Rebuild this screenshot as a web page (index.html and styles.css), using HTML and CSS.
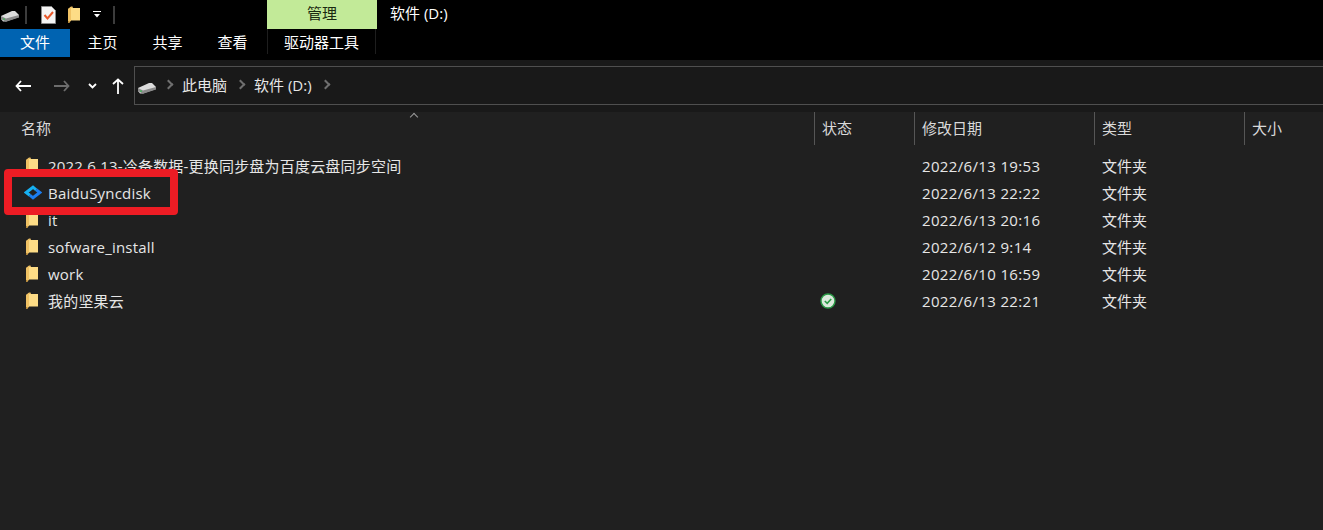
FILE: index.html

```html
<!DOCTYPE html>
<html>
<head>
    <title>软件 (D:)</title>
    <link rel="stylesheet" href="styles.css">
</head>
<body>
    <svg class="defs" width="0" height="0">
        <symbol id="folder" viewBox="0 0 12 17">
            <path d="M0 3 L3 0.5 H4.5 L5 2 H12 V14 H0 Z" fill="#e5b860"/>
            <path d="M3 2 H12 V14.5 H3 L0.8 17 H0 V4 Z" fill="#fddc86"/>
            <path d="M0 3 L3 1 V14.5 L0.8 17 H0 Z" fill="#f0c264"/>
            <rect x="0" y="15" width="1.5" height="2" fill="#b98a3a"/>
        </symbol>
        <symbol id="drive" viewBox="0 0 18 11">
            <path d="M0 5 L11 0 H14 L18 4 V6 L5 10.5 H2 L0 8 Z" fill="#dcdcdc"/>
            <path d="M0 5 L5 7.5 L18 4 V6.5 L5 10.8 L0 8 Z" fill="#8a8a8a"/>
            <rect x="2" y="7.5" width="2" height="1.2" fill="#3dbb55"/>
        </symbol>
    </svg>

    <div class="titlebar">
        <div class="quick">
            <svg class="drive-icon"><use href="#drive"/></svg>
            <span class="qsep first"></span>
            <svg class="check-doc" width="15" height="18" viewBox="0 0 15 18">
                <path d="M0.5 0.5 H10.5 L14.5 4.5 V17.5 H0.5 Z" fill="#f4f4f4" stroke="#8a8a8a"/>
                <path d="M3.5 9 L6.5 12.5 L12 6" fill="none" stroke="#e8582a" stroke-width="2"/>
            </svg>
            <svg class="folder-icon quick-folder"><use href="#folder"/></svg>
            <svg class="more" width="8" height="8" viewBox="0 0 8 8">
                <rect x="0" y="0" width="8" height="1" fill="#fff"/>
                <path d="M1 3 H7 L4 6.5 Z" fill="#fff"/>
            </svg>
            <span class="qsep last"></span>
        </div>
        <div class="context-tab">管理</div>
        <div class="window-title">软件 (D:)</div>
    </div>

    <div class="ribbon">
        <div class="tab tab-file">文件</div>
        <div class="tab">主页</div>
        <div class="tab">共享</div>
        <div class="tab">查看</div>
        <div class="tab tab-tools">驱动器工具</div>
    </div>

    <div class="navbar">
        <div class="nav-buttons">
            <svg class="nav-back" width="16" height="12" viewBox="0 0 16 12"><path d="M6 1 L1.5 6 L6 11 M1.5 6 H16" fill="none" stroke="#fff" stroke-width="1.8"/></svg>
            <svg class="nav-forward" width="16" height="12" viewBox="0 0 16 12"><path d="M10 1 L14.5 6 L10 11 M14.5 6 H0" fill="none" stroke="#6d6d6d" stroke-width="1.8"/></svg>
            <svg class="nav-down" width="9" height="6" viewBox="0 0 9 6"><path d="M1 1 L4.5 4.5 L8 1" fill="none" stroke="#fff" stroke-width="1.8"/></svg>
            <svg class="nav-up" width="12" height="16" viewBox="0 0 12 16"><path d="M1 6 L6 1.5 L11 6 M6 1.5 V16" fill="none" stroke="#fff" stroke-width="1.8"/></svg>
        </div>
        <div class="address">
            <svg class="drive-icon"><use href="#drive"/></svg>
            <span class="crumb-arrow"></span>
            <span class="crumb">此电脑</span>
            <span class="crumb-arrow"></span>
            <span class="crumb">软件 (D:)</span>
            <span class="crumb-arrow"></span>
        </div>
    </div>

    <div class="list">
        <div class="columns">
            <div class="col col-name">名称<span class="sort-arrow"></span></div>
            <div class="col">状态</div>
            <div class="col">修改日期</div>
            <div class="col">类型</div>
            <div class="col">大小</div>
        </div>

        <div class="row">
            <div class="cell-name"><svg class="folder-icon"><use href="#folder"/></svg>2022.6.13-冷备数据-更换同步盘为百度云盘同步空间</div>
            <div></div>
            <div class="cell-date">2022/6/13 19:53</div>
            <div class="cell-type">文件夹</div>
        </div>
        <div class="row">
            <div class="cell-name">
                <svg class="baidu-icon" width="18" height="15" viewBox="0 0 18 15">
                    <path d="M5.8 10.2 L2.2 7.5 L9 2.2 L12.2 4.8" fill="none" stroke="#16b1f2" stroke-width="3"/>
                    <path d="M12.2 4.8 L15.8 7.5 L9 12.8 L5.8 10.2" fill="none" stroke="#1c7df0" stroke-width="3"/>
                </svg>BaiduSyncdisk</div>
            <div></div>
            <div class="cell-date">2022/6/13 22:22</div>
            <div class="cell-type">文件夹</div>
        </div>
        <div class="row">
            <div class="cell-name"><svg class="folder-icon"><use href="#folder"/></svg>it</div>
            <div></div>
            <div class="cell-date">2022/6/13 20:16</div>
            <div class="cell-type">文件夹</div>
        </div>
        <div class="row">
            <div class="cell-name"><svg class="folder-icon"><use href="#folder"/></svg>sofware_install</div>
            <div></div>
            <div class="cell-date">2022/6/12 9:14</div>
            <div class="cell-type">文件夹</div>
        </div>
        <div class="row">
            <div class="cell-name"><svg class="folder-icon"><use href="#folder"/></svg>work</div>
            <div></div>
            <div class="cell-date">2022/6/10 16:59</div>
            <div class="cell-type">文件夹</div>
        </div>
        <div class="row">
            <div class="cell-name"><svg class="folder-icon"><use href="#folder"/></svg>我的坚果云</div>
            <div class="cell-status">
                <svg width="16" height="16" viewBox="0 0 16 16">
                    <circle cx="8" cy="8" r="7" fill="#dbe9dc" stroke="#2a9a46" stroke-width="1.4"/>
                    <path d="M4.8 8 L7.2 10.3 L11.2 6" fill="none" stroke="#2a9a46" stroke-width="1.6"/>
                </svg>
            </div>
            <div class="cell-date">2022/6/13 22:21</div>
            <div class="cell-type">文件夹</div>
        </div>
    </div>

    <div class="highlight"></div>
</body>
</html>
```

FILE: styles.css

```css
html, body {
    margin: 0;
    height: 530px;
    overflow: hidden;
}
body {
    position: relative;
    background-color: #202020;
    color: #e6e6e6;
    font-family: "Open Sans", "Noto Sans CJK SC", sans-serif;
    font-size: 15px;
}
.defs {
    position: absolute;
}

/* title bar */
.titlebar {
    display: flex;
    height: 29px;
    background-color: #000;
    color: #fff;
}
.quick {
    display: flex;
    align-items: center;
    width: 267px;
}
.drive-icon {
    width: 18px;
    height: 11px;
    flex: none;
}
.quick .drive-icon {
    margin: 4px 0 0 1px;
}
.qsep {
    width: 2px;
    height: 18px;
    background-color: #3c3c3c;
}
.qsep.first {
    margin-left: 6px;
}
.qsep.last {
    margin-left: 12px;
}
.check-doc {
    margin-left: 14px;
}
.quick .quick-folder {
    margin: 0 0 0 12px;
}
.more {
    margin-left: 13px;
}
.context-tab {
    width: 110px;
    height: 29px;
    line-height: 27px;
    text-align: center;
    background-color: #c2ea98;
    color: #1b2a10;
}
.window-title {
    margin-left: 13px;
    line-height: 27px;
}

/* ribbon */
.ribbon {
    display: flex;
    height: 31px;
    background-color: #000;
    color: #fff;
}
.tab {
    width: 65px;
    height: 28px;
    line-height: 27px;
    text-align: center;
}
.tab-file {
    width: 70px;
    background-color: #0063b1;
}
.tab-tools {
    width: 107px;
    margin-left: 2px;
    border-left: 1px solid #1e1e1e;
    border-right: 1px solid #1e1e1e;
    height: 25px;
}

/* nav bar */
.navbar {
    display: flex;
    height: 52px;
    padding-top: 6px;
    box-sizing: border-box;
    background-color: #191919;
}
.nav-buttons {
    display: flex;
    align-items: center;
    width: 134px;
    height: 40px;
}
.nav-back {
    margin-left: 15px;
}
.nav-forward {
    margin-left: 23px;
}
.nav-down {
    margin-left: 18px;
}
.nav-up {
    margin-left: 15px;
}
.address {
    flex: 1;
    display: flex;
    align-items: center;
    height: 39px;
    box-sizing: border-box;
    border: 1px solid #4f4f4f;
    border-right: none;
    background-color: #191919;
    padding-left: 3px;
}
.address .drive-icon {
    margin-top: 5px;
}
.crumb {
    margin: 0 1px 0 10px;
    line-height: 37px;
}
.crumb-arrow {
    width: 5px;
    height: 5px;
    margin-left: 9px;
    margin-bottom: 3px;
    border-top: 2px solid #6f6f6f;
    border-right: 2px solid #6f6f6f;
    transform: rotate(45deg);
}

/* file list */
.list {
    background-color: #202020;
}
.columns,
.row {
    display: grid;
    grid-template-columns: 815px 100px 180px 150px 1fr;
}
.columns {
    height: 32px;
    margin-bottom: 9px;
    color: #d9d9d9;
}
.col {
    position: relative;
    line-height: 33px;
    padding-left: 7px;
    border-left: 1px solid #565656;
    margin-left: -1px;
}
.col-name {
    padding-left: 21px;
    border-left: none;
    margin-left: 0;
}
.sort-arrow {
    position: absolute;
    left: 411px;
    top: 2px;
    width: 5px;
    height: 5px;
    border-top: 1px solid #9a9a9a;
    border-left: 1px solid #9a9a9a;
    transform: rotate(45deg);
}
.row {
    height: 27px;
    line-height: 26px;
}
.cell-date,
.cell-type {
    padding-left: 7px;
}
.cell-date {
    letter-spacing: 0.35px;
}
.cell-name {
    display: flex;
    align-items: center;
    height: 25px;
    letter-spacing: 0.2px;
}
.folder-icon {
    width: 12px;
    height: 17px;
    flex: none;
    margin: 0 10px 0 26px;
}
.baidu-icon {
    flex: none;
    margin: 0 6px 0 24px;
}
.cell-status {
    display: flex;
    align-items: center;
    height: 25px;
    padding-left: 5px;
}

/* red annotation box */
.highlight {
    position: absolute;
    left: 4px;
    top: 169px;
    width: 174px;
    height: 46px;
    box-sizing: border-box;
    border: 8px solid #ed1c24;
    border-radius: 4px;
}
```
